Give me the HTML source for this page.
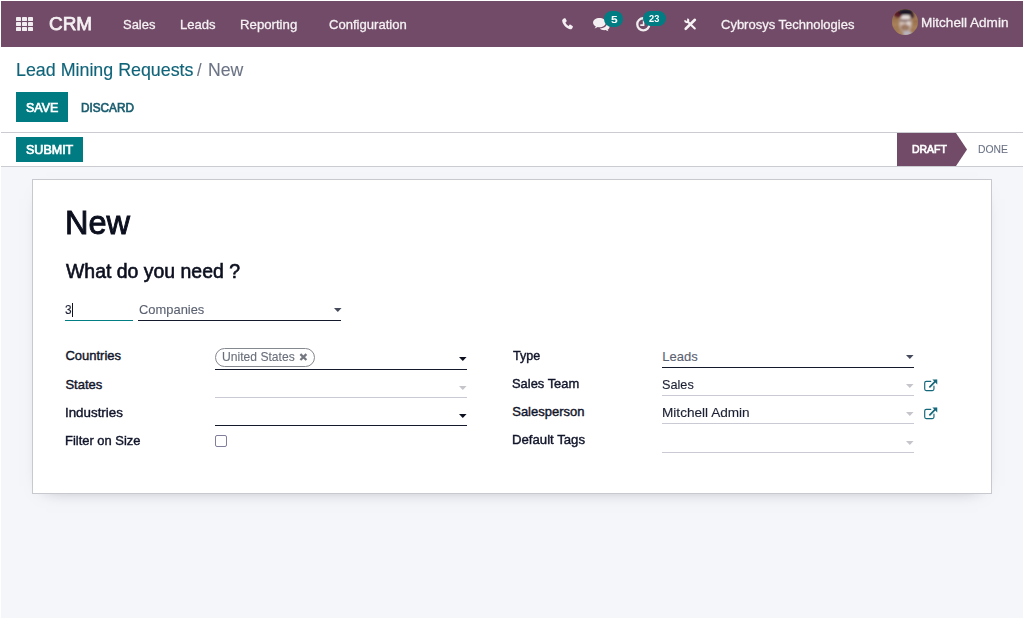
<!DOCTYPE html>
<html lang="en">
<head>
<meta charset="utf-8">
<title>Odoo - Lead Mining Requests / New</title>
<style>
*{box-sizing:border-box;margin:0;padding:0}
html,body{width:1024px;height:619px;overflow:hidden;background:#fff}
body{font-family:"Liberation Sans",Arial,sans-serif;font-size:13px;color:#1f2433;position:relative}
a{text-decoration:none;color:inherit}
ol{list-style:none}
button{font:inherit;border:0;cursor:pointer}
.app{position:absolute;left:1px;top:1px;width:1022px;height:617px;background:#f5f6fa;overflow:hidden}
.app div,.app ol,.app li,.app span,.app i,.app svg,.app button,.app label,.app h1,.app h2,.app a,.app nav,.app header,.app main{position:absolute;display:block}
.t{white-space:nowrap;transform-origin:0 50%;font-weight:normal}
.ic{overflow:visible}
/* navbar */
.navbar{left:0;top:0;width:1022px;height:46px;background:#714b67;color:#f1ecf0}
.brand{color:#f4f0f3;-webkit-text-stroke:.75px #f4f0f3}
.ni{color:#f5f1f4;-webkit-text-stroke:.3px #f5f1f4}
.badge{background:#017c83;border-radius:8.2px}
.bt{color:#fff;font-weight:bold;text-rendering:geometricPrecision}
/* control panel */
.cp{left:0;top:46px;width:1022px;height:86px;background:#fff;border-bottom:1px solid #cbccd1}
.bc-a{color:#10647a;-webkit-text-stroke:.15px #10647a}
.bc-t{color:#6b7385;-webkit-text-stroke:.1px #6b7385}
.btn{background:transparent}
.btn-primary{background:#017b82}
.bl{-webkit-text-stroke:.7px currentColor}
.bw{color:#fff}
.bd{color:#1c5e70}
/* status bar */
.statusbar{left:0;top:132px;width:1022px;height:34px;background:#fff;border-bottom:1px solid #cbccd1}
.sd{color:#6b7385;-webkit-text-stroke:.1px #6b7385}
/* form sheet */
.sheet{left:31px;top:178px;width:960px;height:315px;background:#fff;border:1px solid #c8c9ce;box-shadow:0 6px 18px -14px rgba(20,20,40,.55)}
.h1{color:#0b0f1e;-webkit-text-stroke:.95px #0b0f1e}
.h2{color:#0b0f1e;-webkit-text-stroke:.6px #0b0f1e}
.lb{color:#11152a;-webkit-text-stroke:.4px #11152a}
.val{color:#1b2033;-webkit-text-stroke:.12px #1b2033}
.sel{color:#5a6170;-webkit-text-stroke:.1px #5a6170}
.tg{color:#696e7a;-webkit-text-stroke:.1px #696e7a}
.fld{border-bottom:1px solid #141a2c}
.fld.ro{border-bottom-color:#c9cad3}
.fld.focus{border-bottom-color:#017e84}
.cursor{background:#10131f}
.caret{fill:#0b0f1e}
.caret.mid{fill:#454a5c}
.caret.lt{fill:#c5c5cb}
.tag{border:1px solid #85888f;border-radius:10px;background:#fff}
.chk{border:1px solid #807e9b;border-radius:2px;background:#fff}
.ext{stroke:#15677a;fill:#15677a}
</style>
</head>
<body>
<div class="app" style="left:1px;top:1px;width:1022px;height:617px"><nav class="navbar" style="left:0px;top:0px;width:1022px;height:46px"><svg class="ic" style="left:15px;top:16px;width:17px;height:14px" viewBox="0 0 17 14" aria-hidden="true"><g fill="#f1ecf0"><rect x="0" y="0" width="5" height="4" rx=".4"/><rect x="6" y="0" width="5" height="4" rx=".4"/><rect x="12" y="0" width="5" height="4" rx=".4"/><rect x="0" y="5" width="5" height="4" rx=".4"/><rect x="6" y="5" width="5" height="4" rx=".4"/><rect x="12" y="5" width="5" height="4" rx=".4"/><rect x="0" y="10" width="5" height="4" rx=".4"/><rect x="6" y="10" width="5" height="4" rx=".4"/><rect x="12" y="10" width="5" height="4" rx=".4"/></g></svg>
<a id="nav_crm" class="t brand" href="#" style="left:48.35px;top:11px;font-size:18.8px;line-height:23px;transform:scaleX(1.0072)">CRM</a><a id="nav_sales" class="t ni" href="#" style="left:121.95px;top:16px;font-size:13.4px;line-height:16px;transform:scaleX(0.9673)">Sales</a><a id="nav_leads" class="t ni" href="#" style="left:178.69px;top:16px;font-size:13.4px;line-height:16px;transform:scaleX(0.9760)">Leads</a><a id="nav_rep" class="t ni" href="#" style="left:238.86px;top:16px;font-size:13.4px;line-height:16px;transform:scaleX(0.9859)">Reporting</a><a id="nav_conf" class="t ni" href="#" style="left:328.08px;top:16px;font-size:13.4px;line-height:16px;transform:scaleX(0.9756)">Configuration</a><svg class="ic" style="left:560.5px;top:17.2px;width:11.7px;height:11.2px" viewBox="0 0 11.7 11.2" aria-hidden="true"><path d="M2.2.3c.5-.3 1-.2 1.3.3l1.1 2c.2.4.1.9-.3 1.2l-.9.7c.6 1.4 1.7 2.6 3.2 3.4l.8-.9c.3-.4.8-.5 1.2-.2l1.9 1.2c.5.3.6.8.3 1.3l-.7 1.1c-.5.7-1.3 1-2.2.8C4.3 10.3.9 6.9.2 3.1 0 2.3.4 1.4 1.1.9Z" fill="#f4eff3"/></svg>
<svg class="ic" style="left:591.8px;top:16.8px;width:16.6px;height:13.2px" viewBox="0 0 17 13.6" aria-hidden="true"><path d="M6.6 0C10.2 0 13.1 2.1 13.1 4.8S10.2 9.6 6.6 9.6c-.6 0-1.2-.1-1.7-.2-.9.7-2 1.2-3.3 1.3.5-.5 1-1.2 1.2-2.1C1.1 7.7 0 6.3 0 4.8 0 2.1 3 0 6.6 0Z" fill="#f2eef1"/><path d="M14.4 5.4c1.5.8 2.6 2 2.6 3.5 0 1.3-.8 2.4-2.1 3.2.2.7.6 1.2 1.1 1.5-1.2-.1-2.2-.5-3-1.1-.4.1-.9.1-1.3.1-2 0-3.7-.7-4.7-1.8 4.1-.1 7.4-2.4 7.4-5.4Z" fill="#f2eef1"/></svg>
<span class="badge" style="left:603px;top:9.8px;width:19.1px;height:16.3px"><span id="nav_b5" class="t bt" style="left:6.85px;top:4.2px;font-size:10.2px;line-height:12px;transform:scaleX(1.1712)">5</span></span>
<svg class="ic" style="left:635px;top:16px;width:14.6px;height:14.6px" viewBox="0 0 14.6 14.6" aria-hidden="true"><circle cx="7.3" cy="7.3" r="6.05" fill="none" stroke="#f1ecf0" stroke-width="2.3"/><path d="M7.6 3.4V8.1H4.3" fill="none" stroke="#f1ecf0" stroke-width="1.6"/></svg>
<span class="badge" style="left:642px;top:9.8px;width:23.1px;height:15.3px"><span id="nav_b23" class="t bt" style="left:5.91px;top:3.2px;font-size:10.2px;line-height:12px;transform:scaleX(0.9062)">23</span></span>
<svg class="ic" style="left:682.5px;top:16.8px;width:12.8px;height:12.6px" viewBox="0 0 12.8 12.6" aria-hidden="true"><g fill="none" stroke="#f6f2f5"><path d="M10.9 1.8L1.7 10.8" stroke-width="2.6" stroke-linecap="round"/><path d="M3.6 3.5L10.8 10.5" stroke-width="2.1" stroke-linecap="round"/><path d="M3.19 1.25A1.5 1.5 0 1 1 1.35 2.31" stroke-width="1.9"/></g></svg>
<a id="nav_comp" class="t ni" href="#" style="left:719.55px;top:16px;font-size:13.4px;line-height:16px;transform:scaleX(0.9705)">Cybrosys Technologies</a><svg class="ic" style="left:891px;top:8px;width:26px;height:26px" viewBox="0 0 26 26" aria-hidden="true"><defs><clipPath id="avc"><circle cx="13" cy="13" r="13"/></clipPath><filter id="avb" x="-10%" y="-10%" width="120%" height="120%"><feGaussianBlur stdDeviation=".8"/></filter></defs><g clip-path="url(#avc)"><rect x="-2" y="-2" width="30" height="30" fill="#a27a54"/><g filter="url(#avb)"><rect x="0" y="9" width="6" height="1.2" fill="#8a6442"/><rect x="21" y="12" width="6" height="1.2" fill="#8a6442"/><rect x="0" y="15" width="5" height="1.2" fill="#b58c64"/><rect x="21" y="18" width="6" height="1.2" fill="#b58c64"/><ellipse cx="13.4" cy="14.5" rx="6.6" ry="9.6" fill="#c2ada2"/><ellipse cx="6.2" cy="5.2" rx="4.2" ry="3.4" fill="#5a1a26"/><ellipse cx="13.6" cy="3.2" rx="7.2" ry="3.3" fill="#1b1428"/><ellipse cx="20" cy="6.6" rx="1.8" ry="3" fill="#3a2030"/><ellipse cx="13.6" cy="8.3" rx="4.4" ry="2.2" fill="#e6dedc"/><rect x="7.6" y="10.6" width="11.4" height="1.9" fill="#4d3038" opacity=".65"/><ellipse cx="16.6" cy="14.4" rx="2" ry="2.4" fill="#e0d5d2"/><ellipse cx="10" cy="14.4" rx="1.8" ry="2" fill="#d2c0b8"/><ellipse cx="13" cy="18.6" rx="4.4" ry="3.2" fill="#9c7a64"/><circle cx="12" cy="16.4" r=".6" fill="#b5482f" opacity=".8"/><ellipse cx="15" cy="24.6" rx="5" ry="2.6" fill="#b9b4c0"/><ellipse cx="8.5" cy="24.4" rx="3" ry="2.4" fill="#a8835f"/></g></g></svg>
<a id="nav_user" class="t ni" href="#" style="left:919.8px;top:14px;font-size:13.4px;line-height:16px;transform:scaleX(1.0129)">Mitchell Admin</a></nav>
<header class="cp" style="left:0px;top:46px;width:1022px;height:86px"><ol class="breadcrumb" style="left:0px;top:0px;width:399px;height:45px"><li class="bc-item" style="left:0px;top:0px;width:195px;height:45px"><a id="bc_a" class="t bc-a" href="#" style="left:14.78px;top:12px;font-size:18.4px;line-height:22px;transform:scaleX(0.9699)">Lead Mining Requests</a></li>
<li class="bc-item" style="left:195px;top:0px;width:204px;height:45px"><span id="bc_sep" class="t bc-t" style="left:1.14px;top:12px;font-size:18.4px;line-height:22px;transform:scaleX(0.8969)">/</span><span id="bc_new" class="t bc-t" style="left:11.7px;top:12px;font-size:18.4px;line-height:22px;transform:scaleX(0.9596)">New</span></li>
</ol>
<button class="btn btn-primary" type="button" style="left:15px;top:45px;width:52px;height:30px"><span id="b_save" class="t bl bw" style="left:10.49px;top:9px;font-size:12.2px;line-height:15px;transform:scaleX(1.0178)">SAVE</span></button>
<button class="btn btn-secondary" type="button" style="left:73px;top:45px;width:68px;height:30px"><span id="b_disc" class="t bl bd" style="left:7.11px;top:9px;font-size:12.2px;line-height:15px;transform:scaleX(0.9644)">DISCARD</span></button>
</header>
<div class="statusbar" style="left:0px;top:132px;width:1022px;height:34px"><button class="btn btn-primary" type="button" style="left:15px;top:4px;width:67px;height:25px"><span id="b_sub" class="t bl bw" style="left:10.22px;top:6px;font-size:12.2px;line-height:15px;transform:scaleX(1.0264)">SUBMIT</span></button>
<svg class="ic" style="left:896px;top:0px;width:71px;height:33px" viewBox="0 0 71 33" aria-hidden="true"><path d="M0 0H59L70 16.5L59 33H0Z" fill="#714b67"/></svg>
<span id="s_draft" class="t bl bw" style="left:911.11px;top:9px;font-size:11.3px;line-height:14px;transform:scaleX(0.9256)">DRAFT</span><span id="s_done" class="t sd" style="left:976.95px;top:9px;font-size:11.6px;line-height:14px;transform:scaleX(0.8927)">DONE</span></div>
<main class="sheet" style="left:31px;top:178px;width:960px;height:315px"><h1 id="h_new" class="t h1" style="left:32.18px;top:23px;font-size:33.5px;line-height:40px;transform:scaleX(0.9696)">New</h1><h2 id="h_what" class="t h2" style="left:33.14px;top:79px;font-size:19.7px;line-height:24px;transform:scaleX(0.9872)">What do you need ?</h2><div class="fld focus" style="left:32px;top:118px;width:68px;height:23px"><span id="v_3" class="t val" style="left:-0.31px;top:4px;font-size:13px;line-height:16px;transform:scaleX(0.9126)">3</span><i class="cursor" style="left:7px;top:4.5px;width:1px;height:14.5px"></i>
</div>
<div class="fld" style="left:105px;top:118px;width:203px;height:23px"><span id="v_comp" class="t sel" style="left:0.95px;top:4px;font-size:13px;line-height:16px;transform:scaleX(0.9933)">Companies</span><svg class="ic caret mid" style="left:195.5px;top:10px;width:7.6px;height:4.1px" viewBox="0 0 7.6 4.1" aria-hidden="true"><path d="M0 0H7.6L3.8 4.1Z"/></svg>
</div>
<label id="l_cou" class="t lb" style="left:32.4px;top:168px;font-size:13px;line-height:16px;transform:scaleX(1.0000)">Countries</label><div class="fld" style="left:182px;top:166px;width:252px;height:24px"><span class="tag" style="left:0px;top:2px;width:100px;height:18.6px"><span id="v_us" class="t tg" style="left:5.74px;top:1px;font-size:12.6px;line-height:15px;transform:scaleX(0.9622)">United States</span><svg class="ic" style="left:82.6px;top:4px;width:8.8px;height:8.2px" viewBox="0 0 8.8 8.2" aria-hidden="true"><path d="M1.4 1.2L7.4 7M7.4 1.2L1.4 7" fill="none" stroke="#74777f" stroke-width="2.3"/></svg>
</span>
<svg class="ic caret" style="left:244.3px;top:11px;width:7.6px;height:4.1px" viewBox="0 0 7.6 4.1" aria-hidden="true"><path d="M0 0H7.6L3.8 4.1Z"/></svg>
</div>
<label id="l_sta" class="t lb" style="left:32.4px;top:197px;font-size:13px;line-height:16px;transform:scaleX(1.0000)">States</label><div class="fld ro" style="left:182px;top:194px;width:252px;height:24px"><svg class="ic caret lt" style="left:244.3px;top:12px;width:7.6px;height:4.1px" viewBox="0 0 7.6 4.1" aria-hidden="true"><path d="M0 0H7.6L3.8 4.1Z"/></svg>
</div>
<label id="l_ind" class="t lb" style="left:31.86px;top:225px;font-size:13px;line-height:16px;transform:scaleX(1.0260)">Industries</label><div class="fld" style="left:182px;top:222px;width:252px;height:24px"><svg class="ic caret" style="left:244.3px;top:12px;width:7.6px;height:4.1px" viewBox="0 0 7.6 4.1" aria-hidden="true"><path d="M0 0H7.6L3.8 4.1Z"/></svg>
</div>
<label id="l_fil" class="t lb" style="left:31.87px;top:253px;font-size:13px;line-height:16px;transform:scaleX(0.9939)">Filter on Size</label><span class="chk" style="left:182px;top:255px;width:12px;height:12px"></span>
<label id="l_typ" class="t lb" style="left:479.74px;top:168px;font-size:13px;line-height:16px;transform:scaleX(0.9663)">Type</label><div class="fld" style="left:629px;top:164px;width:252px;height:24px"><span id="v_leads" class="t sel" style="left:0.37px;top:5px;font-size:13px;line-height:16px;transform:scaleX(1.0000)">Leads</span><svg class="ic caret mid" style="left:244.4px;top:11px;width:7.6px;height:4.1px" viewBox="0 0 7.6 4.1" aria-hidden="true"><path d="M0 0H7.6L3.8 4.1Z"/></svg>
</div>
<label id="l_team" class="t lb" style="left:479.09px;top:196px;font-size:13px;line-height:16px;transform:scaleX(0.9928)">Sales Team</label><div class="fld ro" style="left:629px;top:192px;width:252px;height:24px"><span id="v_sales" class="t val" style="left:-0.43px;top:5px;font-size:13px;line-height:16px;transform:scaleX(0.9766)">Sales</span><svg class="ic caret lt" style="left:244.4px;top:12px;width:7.6px;height:4.1px" viewBox="0 0 7.6 4.1" aria-hidden="true"><path d="M0 0H7.6L3.8 4.1Z"/></svg>
</div>
<svg class="ic ext" style="left:890.7px;top:198.5px;width:13.7px;height:11.7px" viewBox="0 0 14 12" aria-hidden="true"><path d="M10.2 7.4v2.9c0 .9-.7 1.6-1.6 1.6H2.3c-.9 0-1.6-.7-1.6-1.6V4.1c0-.9.7-1.6 1.6-1.6h4.6" fill="none" stroke-width="1.2" stroke-linecap="round"/><path d="M6 8L12.3 1.7" fill="none" stroke-width="1.8" stroke-linecap="round"/><path d="M8.6.6H13.6V5.6Z" stroke="none"/></svg>
<label id="l_sp" class="t lb" style="left:479.23px;top:224px;font-size:13px;line-height:16px;transform:scaleX(1.0000)">Salesperson</label><div class="fld ro" style="left:629px;top:220px;width:252px;height:24px"><span id="v_user" class="t val" style="left:-0.45px;top:5px;font-size:13px;line-height:16px;transform:scaleX(1.0462)">Mitchell Admin</span><svg class="ic caret lt" style="left:244.4px;top:12px;width:7.6px;height:4.1px" viewBox="0 0 7.6 4.1" aria-hidden="true"><path d="M0 0H7.6L3.8 4.1Z"/></svg>
</div>
<svg class="ic ext" style="left:890.7px;top:226.6px;width:13.7px;height:11.7px" viewBox="0 0 14 12" aria-hidden="true"><path d="M10.2 7.4v2.9c0 .9-.7 1.6-1.6 1.6H2.3c-.9 0-1.6-.7-1.6-1.6V4.1c0-.9.7-1.6 1.6-1.6h4.6" fill="none" stroke-width="1.2" stroke-linecap="round"/><path d="M6 8L12.3 1.7" fill="none" stroke-width="1.8" stroke-linecap="round"/><path d="M8.6.6H13.6V5.6Z" stroke="none"/></svg>
<label id="l_tag" class="t lb" style="left:478.87px;top:252px;font-size:13px;line-height:16px;transform:scaleX(1.0136)">Default Tags</label><div class="fld ro" style="left:629px;top:249px;width:252px;height:24px"><svg class="ic caret lt" style="left:244.4px;top:11.5px;width:7.6px;height:4.1px" viewBox="0 0 7.6 4.1" aria-hidden="true"><path d="M0 0H7.6L3.8 4.1Z"/></svg>
</div>
</main>
</div>
</body>
</html>
